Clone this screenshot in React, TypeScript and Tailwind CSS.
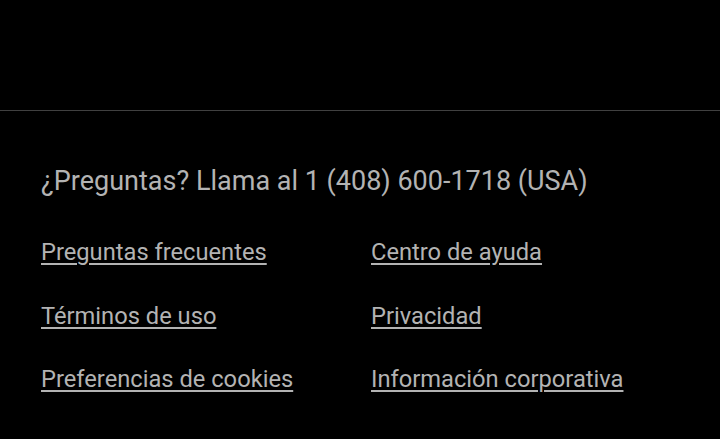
import React from 'react';

type FooterLink = {
  label: string;
  href: string;
};

const links: FooterLink[] = [
  { label: "Preguntas frecuentes", href: "#" },
  { label: "Centro de ayuda", href: "#" },
  { label: "Términos de uso", href: "#" },
  { label: "Privacidad", href: "#" },
  { label: "Preferencias de cookies", href: "#" },
  { label: "Información corporativa", href: "#" },
];

const App: React.FC = () => {
  return (
    <div className="min-h-[439px] w-[720px] bg-black font-['Roboto',sans-serif] text-[#b3b3b3]">
      <div className="h-[110px]" />
      <footer className="border-t border-[#404040] px-[41px] pt-[54px]">
        <p className="text-[27px] leading-[32px]">¿Preguntas? Llama al 1 (408) 600-1718 (USA)</p>
        <ul className="mt-[41px] grid grid-cols-[330px_1fr] gap-y-[35.5px]">
          {links.map(link => (
            <li key={link.label} className="text-[23.7px] leading-[28px]">
              <a href={link.href} className="underline decoration-2 underline-offset-[3px]">{link.label}</a>
            </li>
          ))}
        </ul>
      </footer>
    </div>
  );
};

export default App;
